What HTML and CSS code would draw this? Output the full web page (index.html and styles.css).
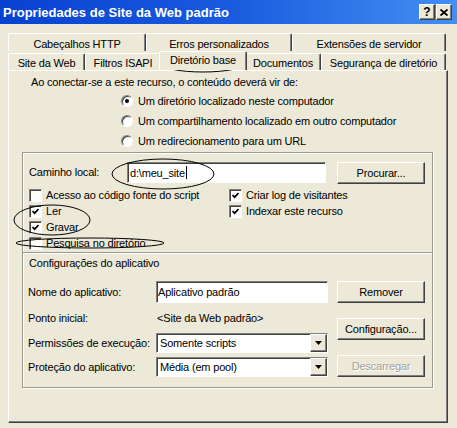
FILE: index.html
```html
<!DOCTYPE html>
<html lang="pt">
<head>
<meta charset="utf-8">
<title>Propriedades de Site da Web padrão</title>
<link rel="stylesheet" href="styles.css">
</head>
<body>
<div class="window">
  <div class="titlebar">
    <span class="title">Propriedades de Site da Web padrão</span>
    <div class="tb-buttons">
      <span class="tb-btn help">?</span>
      <span class="tb-btn close"><svg width="8" height="7" viewBox="0 0 8 7"><path d="M0.5 0.5 L7.5 6.5 M7.5 0.5 L0.5 6.5" stroke="#000" stroke-width="1.8" fill="none"/></svg></span>
    </div>
  </div>
  <div class="client">
    <div class="tabrow back">
      <div class="tab t-cab">Cabeçalhos HTTP</div>
      <div class="tab t-err">Erros personalizados</div>
      <div class="tab t-ext">Extensões de servidor</div>
    </div>
    <div class="tabrow front">
      <div class="tab t-site">Site da Web</div>
      <div class="tab t-filt">Filtros ISAPI</div>
      <div class="tab t-dir selected">Diretório base</div>
      <div class="tab t-doc">Documentos</div>
      <div class="tab t-seg">Segurança de diretório</div>
    </div>
    <div class="panel">
      <p class="intro">Ao conectar-se a este recurso, o conteúdo deverá vir de:</p>
      <div class="radios">
        <div class="radio-row"><span class="radio checked"></span>Um diretório localizado neste computador</div>
        <div class="radio-row"><span class="radio"></span>Um compartilhamento localizado em outro computador</div>
        <div class="radio-row"><span class="radio"></span>Um redirecionamento para um URL</div>
      </div>
      <div class="group">
        <div class="path-row">
          <span class="path-label">Caminho local:</span>
          <span class="field path">d:\meu_site<span class="caret"></span></span>
          <span class="button browse">Procurar...</span>
        </div>
        <div class="checks">
          <div class="check-item"><span class="check"></span>Acesso ao código fonte do script</div>
          <div class="check-item"><span class="check on"><svg width="7" height="7" viewBox="0 0 7 7"><path d="M0.5 3 L2.6 5.2 L6.6 1" stroke="#000" stroke-width="1.7" fill="none"/></svg></span>Criar log de visitantes</div>
          <div class="check-item"><span class="check on"><svg width="7" height="7" viewBox="0 0 7 7"><path d="M0.5 3 L2.6 5.2 L6.6 1" stroke="#000" stroke-width="1.7" fill="none"/></svg></span>Ler</div>
          <div class="check-item"><span class="check on"><svg width="7" height="7" viewBox="0 0 7 7"><path d="M0.5 3 L2.6 5.2 L6.6 1" stroke="#000" stroke-width="1.7" fill="none"/></svg></span>Indexar este recurso</div>
          <div class="check-item"><span class="check on"><svg width="7" height="7" viewBox="0 0 7 7"><path d="M0.5 3 L2.6 5.2 L6.6 1" stroke="#000" stroke-width="1.7" fill="none"/></svg></span>Gravar</div>
          <div class="check-item empty"></div>
          <div class="check-item"><span class="check"></span>Pesquisa no diretório</div>
        </div>
        <div class="separator"></div>
        <div class="section">Configurações do aplicativo</div>
        <div class="app">
          <div class="app-grid">
            <span class="app-label">Nome do aplicativo:</span>
            <span class="field name">Aplicativo padrão</span>
            <span class="app-label">Ponto inicial:</span>
            <span class="app-value">&lt;Site da Web padrão&gt;</span>
            <span class="app-label">Permissões de execução:</span>
            <span class="field select"><span class="sel-value">Somente scripts</span><span class="drop"><svg width="7" height="4" viewBox="0 0 7 4"><path d="M0 0 H7 L3.5 4 Z" fill="#000"/></svg></span></span>
            <span class="app-label">Proteção do aplicativo:</span>
            <span class="field select"><span class="sel-value">Média (em pool)</span><span class="drop"><svg width="7" height="4" viewBox="0 0 7 4"><path d="M0 0 H7 L3.5 4 Z" fill="#000"/></svg></span></span>
          </div>
          <div class="app-buttons">
            <span class="button">Remover</span>
            <span class="button">Configuração...</span>
            <span class="button disabled">Descarregar</span>
          </div>
        </div>
      </div>
    </div>
  </div>
  <svg class="marks" width="457" height="428" viewBox="0 0 457 428" aria-hidden="true">
    <ellipse cx="203" cy="63" rx="43" ry="9"/>
    <ellipse cx="163" cy="174" rx="51" ry="15"/>
    <ellipse cx="52" cy="220" rx="38" ry="15"/>
    <ellipse cx="90" cy="243" rx="74" ry="5"/>
  </svg>
</div>
</body>
</html>
```
FILE: styles.css
```css
* { box-sizing: border-box; }
html, body { margin: 0; padding: 0; }
body {
  background: #ece9d8;
  font-family: "Liberation Sans", Arial, sans-serif;
  font-size: 11px;
  letter-spacing: -0.18px;
  color: #000;
}
.window {
  position: relative;
  width: 457px;
  height: 428px;
  overflow: hidden;
  background: #ece9d8;
}
.titlebar {
  height: 24px;
  display: flex;
  align-items: center;
  background: linear-gradient(to right, #0842d0 0%, #1a5ade 50%, #4290f2 100%);
}
.title {
  padding-left: 3px;
  color: #fff;
  font-weight: bold;
  font-size: 13px;
  letter-spacing: 0;
  white-space: nowrap;
}
.tb-buttons {
  margin-left: auto;
  margin-right: 5px;
  display: flex;
  gap: 1px;
}
.tb-btn {
  width: 16px;
  height: 16px;
  background: #ece9d8;
  border: 1px solid;
  border-color: #fff #404040 #404040 #fff;
  box-shadow: inset -1px -1px #808080;
  display: flex;
  align-items: center;
  justify-content: center;
  font-weight: bold;
  font-size: 12px;
  letter-spacing: 0;
  line-height: 1;
}
.client { padding-top: 9px; }
.tabrow {
  display: flex;
  margin-left: 8px;
  width: 438px;
}
.tabrow.back { height: 18px; }
.tabrow.front { height: 19px; align-items: flex-end; }
.tab {
  height: 18px;
  padding-top: 4px;
  text-align: center;
  line-height: 13px;
  white-space: nowrap;
  border-left: 1px solid #fff;
  border-top: 1px solid #fff;
  border-right: 1px solid #404040;
  box-shadow: inset -1px 0 #808080;
  border-radius: 2px 2px 0 0;
  background: #ece9d8;
}
.tabrow.front .tab { height: 17px; padding-top: 3px; }
.tabrow.front .tab.selected {
  height: 19px;
  padding-top: 2px;
  margin: 0 -2px;
  position: relative;
  z-index: 1;
}
.t-cab { width: 138px; }
.t-err { width: 146px; }
.t-ext { width: 154px; }
.t-site { width: 77px; }
.t-filt { width: 76px; }
.t-dir { width: 88px; }
.t-doc { width: 76px; }
.t-seg { width: 125px; }
.panel {
  width: 440px;
  height: 353px;
  margin-left: 8px;
  border-left: 1px solid #fff;
  border-top: 1px solid #fff;
  border-right: 1px solid #404040;
  border-bottom: 1px solid #404040;
  box-shadow: inset -1px -1px #808080;
}
.intro {
  margin: 5px 0 0 22px;
  line-height: 13px;
}
.radios {
  margin-top: 2px;
  padding-left: 112px;
}
.radio-row {
  height: 20px;
  display: flex;
  align-items: center;
  gap: 5px;
}
.radio {
  flex: none;
  width: 12px;
  height: 12px;
  border-radius: 50%;
  background: #fff;
  border: 1px solid;
  border-color: #808080 #fff #fff #808080;
  box-shadow: inset 1px 1px #404040;
  display: flex;
  align-items: center;
  justify-content: center;
}
.radio.checked::after {
  content: "";
  width: 4px;
  height: 4px;
  border-radius: 50%;
  background: #000;
}
.group {
  margin: 1px 0 0 13px;
  width: 411px;
  height: 236px;
  border: 1px solid #9c9a90;
  box-shadow: inset 1px 1px #fff, 1px 1px #fff;
  padding-top: 9px;
}
.path-row {
  display: flex;
  align-items: flex-start;
  height: 22px;
  margin-left: 6px;
}
.path-label {
  width: 98px;
  line-height: 21px;
}
.field {
  background: #fff;
  border: 1px solid;
  border-color: #808080 #fff #fff #808080;
  box-shadow: inset 1px 1px #404040;
  display: flex;
  align-items: center;
  white-space: nowrap;
}
.field.path {
  width: 199px;
  height: 21px;
  padding-left: 2px;
}
.caret {
  display: inline-block;
  width: 1px;
  height: 13px;
  background: #000;
  margin-left: 1px;
}
.button {
  width: 88px;
  height: 22px;
  border: 1px solid;
  border-color: #fff #404040 #404040 #fff;
  box-shadow: inset -1px -1px #808080;
  display: flex;
  align-items: center;
  justify-content: center;
  white-space: nowrap;
  background: #ece9d8;
}
.button.browse { margin-left: 11px; }
.button.disabled {
  color: #a0a0a0;
  text-shadow: 1px 1px #fff;
}
.checks {
  margin: 3px 0 0 6px;
  display: grid;
  grid-template-columns: 200px auto;
  grid-auto-rows: 16px;
}
.check-item {
  display: flex;
  align-items: center;
  gap: 4px;
  white-space: nowrap;
}
.check {
  flex: none;
  width: 13px;
  height: 13px;
  background: #fff;
  border: 1px solid;
  border-color: #808080 #fff #fff #808080;
  box-shadow: inset 1px 1px #404040;
  display: flex;
  align-items: center;
  justify-content: center;
}
.separator {
  margin-top: 1px;
  height: 2px;
  border-top: 1px solid #9c9a90;
  border-bottom: 1px solid #fff;
}
.section {
  margin: 3px 0 0 6px;
  line-height: 13px;
}
.app {
  margin: 11px 0 0 5px;
  display: flex;
  align-items: flex-start;
}
.app-grid {
  display: grid;
  grid-template-columns: 128px 172px;
  grid-template-rows: 22px 22px 20px 20px;
  row-gap: 4px;
}
.app-label, .app-value {
  align-self: center;
  white-space: nowrap;
}
.app-value { padding-left: 1px; }
.field.name { padding-left: 1px; }
.field.select { padding-left: 3px; }
.sel-value { flex: 1; }
.drop {
  width: 17px;
  height: 18px;
  border: 1px solid;
  border-color: #fff #404040 #404040 #fff;
  box-shadow: inset -1px -1px #808080;
  background: #ece9d8;
  display: flex;
  align-items: center;
  justify-content: center;
}
.app-buttons {
  margin-left: 9px;
  display: flex;
  flex-direction: column;
  gap: 15px;
}
.marks {
  position: absolute;
  left: 0;
  top: 0;
  pointer-events: none;
}
.marks ellipse {
  fill: none;
  stroke: #000;
  stroke-width: 1;
}
```
